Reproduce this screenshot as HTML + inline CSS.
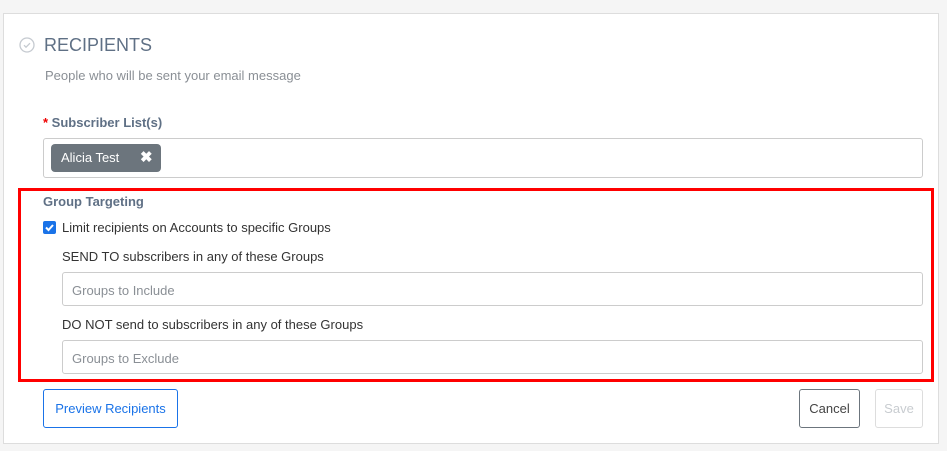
<!DOCTYPE html>
<html><head><style>
body{margin:0;width:947px;height:451px;background:#f5f5f5;font-family:"Liberation Sans",sans-serif;position:relative;overflow:hidden}
.a{position:absolute}
.panel{left:3px;top:13px;width:934px;height:429px;background:#fff;border:1px solid #ddd}
.inp{border:1px solid #ccc;border-radius:3px;background:#fff;box-sizing:border-box}
.ph{color:#8a8f95;font-size:13px}
</style></head><body>
<div class="a panel"></div>
<svg class="a" style="left:19px;top:37px" width="16" height="16" viewBox="0 0 16 16"><circle cx="8" cy="8" r="7" fill="none" stroke="#c5cad0" stroke-width="1.3"/><path d="M5 8.2l2 2 4-4" fill="none" stroke="#c5cad0" stroke-width="1.3"/></svg>
<div class="a" style="left:44px;top:35px;font-size:18px;color:#5f7085">RECIPIENTS</div>
<div class="a" style="left:45px;top:68px;font-size:13px;color:#8a8f95">People who will be sent your email message</div>
<div class="a" style="left:43px;top:115px;font-size:13px;font-weight:bold;color:#5f7085"><span style="color:#e00">*</span> Subscriber List(s)</div>
<div class="a inp" style="left:43px;top:138px;width:880px;height:40px"></div>
<div class="a" style="left:51px;top:144px;width:110px;height:28px;background:#6c757d;border-radius:4px;color:#fff;font-size:13px;line-height:28px"><span style="margin-left:10px">Alicia Test</span><span style="position:absolute;left:89px;font-weight:bold;font-size:15px">✖</span></div>
<div class="a" style="left:18px;top:188px;width:916px;height:194px;border:3px solid #f00;box-sizing:border-box"></div>
<div class="a" style="left:43px;top:194px;font-size:13px;font-weight:bold;color:#5f7085">Group Targeting</div>
<div class="a" style="left:43px;top:221px;width:13px;height:13px;background:#1a73e8;border-radius:2px"><svg width="13" height="13" viewBox="0 0 13 13"><path d="M3 6.5l2.5 2.5 4.5-5" fill="none" stroke="#fff" stroke-width="2"/></svg></div>
<div class="a" style="left:62px;top:220px;font-size:13px;color:#333">Limit recipients on Accounts to specific Groups</div>
<div class="a" style="left:62px;top:249px;font-size:13px;color:#333">SEND TO subscribers in any of these Groups</div>
<div class="a inp" style="left:62px;top:272px;width:861px;height:34px"><span class="a ph" style="left:9px;top:10px">Groups to Include</span></div>
<div class="a" style="left:62px;top:317px;font-size:13px;color:#333">DO NOT send to subscribers in any of these Groups</div>
<div class="a inp" style="left:62px;top:340px;width:861px;height:34px"><span class="a ph" style="left:9px;top:10px">Groups to Exclude</span></div>
<div class="a" style="left:43px;top:389px;width:135px;height:39px;border:1px solid #1a73e8;border-radius:3px;box-sizing:border-box;color:#1a73e8;font-size:13px;line-height:37px;text-align:center">Preview Recipients</div>
<div class="a" style="left:799px;top:389px;width:61px;height:39px;border:1px solid #6c757d;border-radius:3px;box-sizing:border-box;color:#444;font-size:13px;line-height:37px;text-align:center">Cancel</div>
<div class="a" style="left:875px;top:389px;width:48px;height:39px;border:1px solid #ddd;border-radius:3px;box-sizing:border-box;color:#c8ccd0;font-size:13px;line-height:37px;text-align:center">Save</div>
</body></html>
